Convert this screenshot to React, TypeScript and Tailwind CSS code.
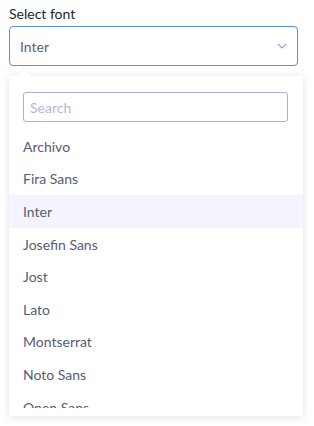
import React from 'react';

function App() {
  const fonts = [
    'Archivo',
    'Fira Sans',
    'Inter',
    'Josefin Sans',
    'Jost',
    'Lato',
    'Montserrat',
    'Noto Sans',
    'Open Sans',
  ];
  const selected = 'Inter';

  return (
    <div className="relative w-[314px] h-[426px] bg-white font-['Lato',sans-serif] overflow-hidden">
      <div className="px-[9px] pt-[4px]">
        <label className="block text-[14px] leading-[20px] text-[#1a1f2e] mb-[2px]">Select font</label>
        <div className="flex items-center justify-between w-[289px] h-10 border border-[#5b8def] rounded-[4px] pl-[10px] pr-[8px]">
          <span className="text-[14px] text-[#5a6077]">Inter</span>
          <svg width="10" height="6" viewBox="0 0 10 6" fill="none" className="mr-[2px]">
            <path d="M0.8 0.8 L5 5 L9.2 0.8" stroke="#7fa0e6" strokeWidth="1.1" />
          </svg>
        </div>
      </div>

      {/* Dropdown panel */}
      <div className="absolute left-[9px] top-[76px] w-[294px] h-[340px] bg-white rounded-[4px] shadow-[0_1px_8px_rgba(0,0,0,0.12)]">
        <div className="absolute -top-[5px] left-[10px] w-[10px] h-[10px] bg-white rotate-45 shadow-[-1px_-1px_2px_rgba(0,0,0,0.05)]" />
        <div className="relative bg-white rounded-[4px] h-full pt-4 pb-2">
          <div className="px-[14px] pr-[15px]">
            <div className="h-[30px] border border-[#aab1d3] rounded-[3px] flex items-center px-[6px]">
              <span className="text-[14px] text-[#b3b9d6]">Search</span>
            </div>
          </div>
          <div className="mt-2 h-[278px] overflow-hidden">
            {fonts.map((f) => (
              <div
                key={f}
                className={`h-[32.6px] flex items-center px-[14px] text-[14px] text-[#565c76] ${
                  f === selected ? 'bg-[#f3f4fd]' : ''
                }`}
              >
                {f}
              </div>
            ))}
          </div>
        </div>
      </div>
    </div>
  );
}

export default App;
